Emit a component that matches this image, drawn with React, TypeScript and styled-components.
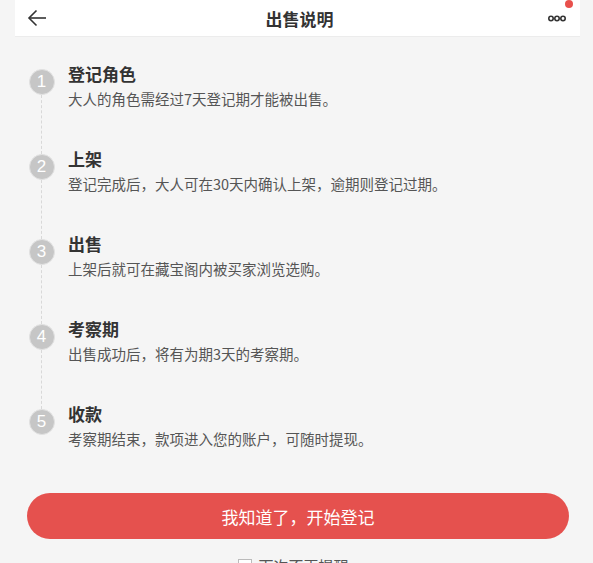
import React from "react";
import styled, {createGlobalStyle} from "styled-components";

const GlobalStyle = createGlobalStyle`
  html, body {
    margin: 0;
    padding: 0;
    background: #f5f5f5;
    font-family: "Noto Sans CJK SC", "Noto Sans", sans-serif;
  }
`;

const steps = [
    {title: "登记角色", desc: "大人的角色需经过7天登记期才能被出售。"},
    {title: "上架", desc: "登记完成后，大人可在30天内确认上架，逾期则登记过期。"},
    {title: "出售", desc: "上架后就可在藏宝阁内被买家浏览选购。"},
    {title: "考察期", desc: "出售成功后，将有为期3天的考察期。"},
    {title: "收款", desc: "考察期结束，款项进入您的账户，可随时提现。"},
];

export const App = () => {
    return (
        <Page>
            <GlobalStyle/>
            <Header>
                <BackButton>
                    <svg width="20" height="18" viewBox="0 0 20 18" fill="none" stroke="#333" strokeWidth="1.6">
                        <path d="M19 9H2"/>
                        <path d="M9.5 1.5L2 9l7.5 7.5"/>
                    </svg>
                </BackButton>
                <Title>出售说明</Title>
                <MoreButton>
                    <svg width="18" height="7" viewBox="0 0 18 7" fill="none" stroke="#333" strokeWidth="1.6">
                        <circle cx="3" cy="3.5" r="2.2"/>
                        <circle cx="9" cy="3.5" r="2.2"/>
                        <circle cx="15" cy="3.5" r="2.2"/>
                    </svg>
                    <Badge/>
                </MoreButton>
            </Header>

            <StepList>
                {steps.map((s, i) => (
                    <Step key={i}>
                        <Marker>
                            <Circle>{i + 1}</Circle>
                            {i < steps.length - 1 && <Dots/>}
                        </Marker>
                        <Content>
                            <StepTitle>{s.title}</StepTitle>
                            <StepDesc>{s.desc}</StepDesc>
                        </Content>
                    </Step>
                ))}
            </StepList>

            <Footer>
                <MainButton>我知道了，开始登记</MainButton>
                <Remember>
                    <Check/>
                    <span>下次不再提醒</span>
                </Remember>
            </Footer>
        </Page>
    );
}

export default App;

const Page = styled.div`
  width: 593px;
  height: 563px;
  overflow: hidden;
  background: #f5f5f5;
`;

const Header = styled.div`
  margin: 0 13px 0 15px;
  height: 37px;
  background: #fff;
  border-bottom: 1px solid #ececec;
  display: flex;
  align-items: center;
  justify-content: space-between;
  padding: 0 14px 0 12px;
  box-sizing: border-box;
`;

const BackButton = styled.div`
  width: 20px;
  height: 18px;
  display: flex;
  align-items: center;
`;

const Title = styled.div`
  font-size: 17px;
  font-weight: bold;
  color: #333;
  margin-left: 4px;
`;

const MoreButton = styled.div`
  position: relative;
  width: 18px;
  height: 7px;
  display: flex;
  margin-top: 1px;

  svg {
    display: block;
  }
`;

const Badge = styled.span`
  position: absolute;
  right: -7px;
  top: -15px;
  width: 8px;
  height: 8px;
  border-radius: 50%;
  background: #e8504c;
`;

const StepList = styled.div`
  padding: 25px 0 0 28px;
`;

const Step = styled.div`
  display: flex;
  height: 85px;
`;

const Marker = styled.div`
  width: 27px;
  display: flex;
  flex-direction: column;
  align-items: center;
  padding-top: 7px;
  box-sizing: border-box;
  margin-right: 13px;
`;

const Circle = styled.div`
  width: 24px;
  height: 24px;
  border-radius: 50%;
  background: #c6c6c6;
  border: 1.5px solid #e2e2e2;
  color: #fff;
  font-family: "Liberation Sans", Arial, sans-serif;
  font-size: 17px;
  line-height: 24px;
  text-align: center;
  flex-shrink: 0;
`;

const Dots = styled.div`
  flex: 1;
  width: 0;
  border-left: 1px dashed #d8d8d8;
  margin-bottom: -7px;
`;

const Content = styled.div`
  display: flex;
  flex-direction: column;
`;

const StepTitle = styled.div`
  font-size: 17px;
  font-weight: bold;
  color: #333;
  line-height: 24px;
`;

const StepDesc = styled.div`
  font-size: 14.5px;
  color: #555;
  line-height: 20px;
  margin-top: 3px;
`;

const Footer = styled.div`
  display: flex;
  flex-direction: column;
  align-items: center;
  padding-top: 6px;
`;

const MainButton = styled.button`
  width: 542px;
  height: 46px;
  margin-left: 3px;
  border: none;
  border-radius: 23px;
  background: #e5514e;
  color: #fff;
  font-family: "Noto Sans CJK SC", "Noto Sans", sans-serif;
  font-size: 17px;
`;

const Remember = styled.div`
  display: flex;
  align-items: center;
  margin-top: 16px;
  font-size: 15px;
  color: #555;
  margin-left: -6px;
`;

const Check = styled.span`
  width: 12px;
  height: 12px;
  border: 1px solid #bbb;
  background: #fff;
  margin-right: 6px;
`;
